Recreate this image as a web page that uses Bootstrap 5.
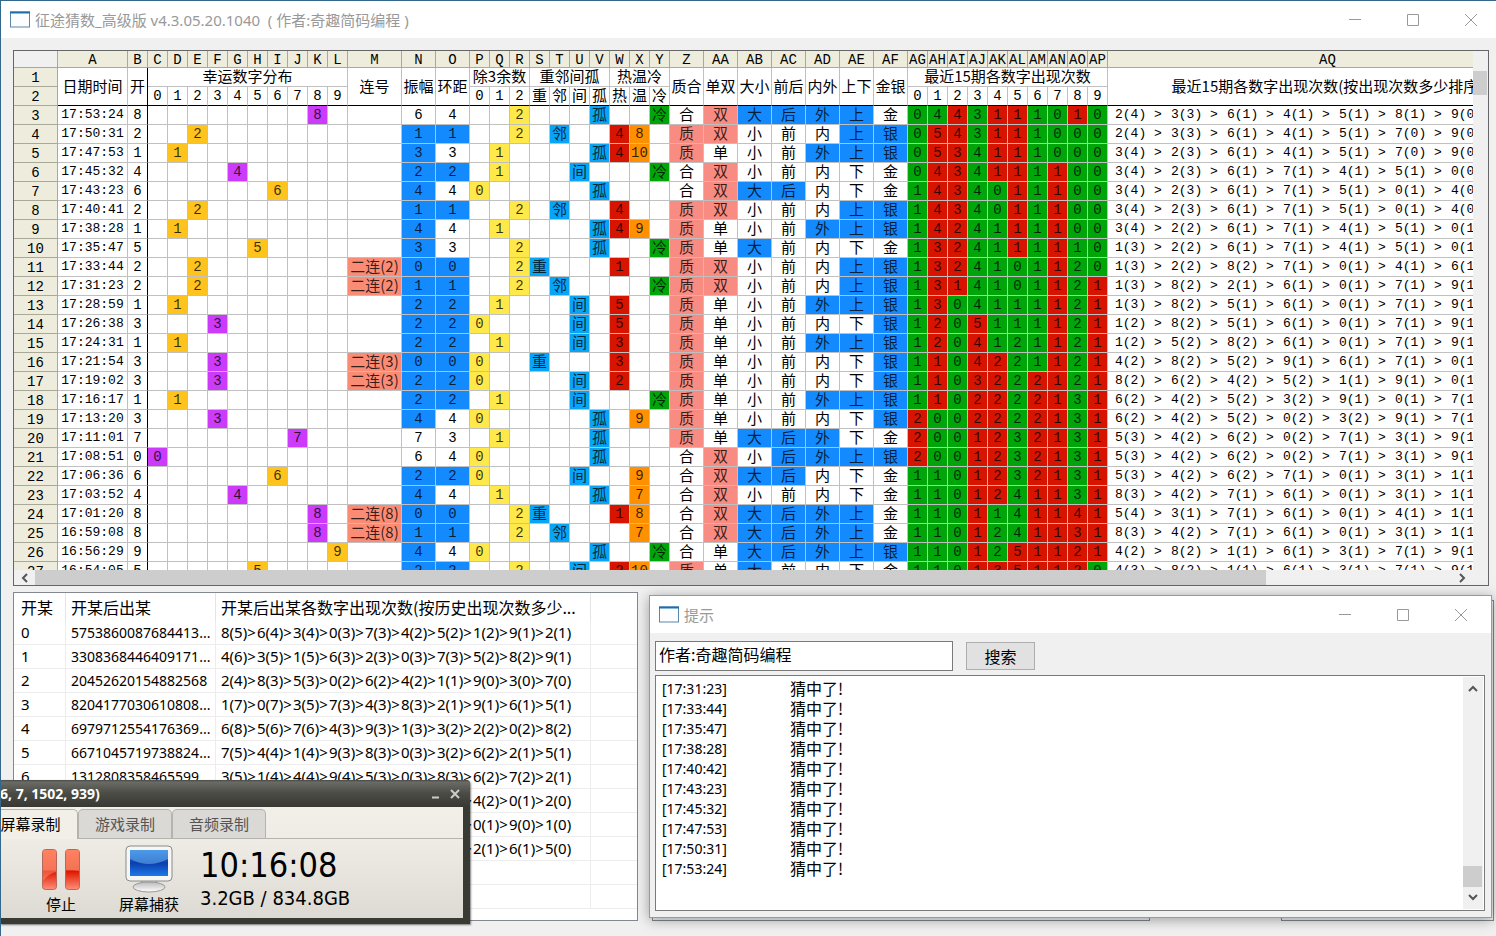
<!DOCTYPE html>
<html lang="zh-CN">
<head>
<meta charset="utf-8">
<meta name="viewport" content="width=device-width, initial-scale=1">
<title>征途猜数_高级版</title>
<link rel="stylesheet" href="https://cdn.jsdelivr.net/npm/bootstrap@5.3.0/dist/css/bootstrap.min.css">
<style>
  body { font-family: "Noto Sans", "Noto Sans CJK SC", sans-serif; font-size: 15px; line-height: 20px; color: #000; background: #f0f0f0; }
  .app { height: 100vh; border-left: 1px solid #33688c; border-top: 1px solid #33688c; }
  .titlebar { height: 37px; background: #fff; color: #999; padding: 0 19px 0 9px; gap: 5px; }
  .winbtns { gap: 46px; }
  .winbtns button, .plainbtn { border: 0; padding: 0; background: none; line-height: 0; }
  .workarea { padding: 12px 7px 15px 12px; gap: 6px; }

  /* number grid */
  .sheet { border: 1px solid #666; background: #f0f0f0; }
  .sheet-view { background: #fff; }
  .grid { table-layout: fixed; width: 1534px; border-collapse: separate; border-spacing: 0; font: 14px/18px "Liberation Mono", "Noto Sans CJK SC", monospace; text-align: center; }
  .grid th, .grid td { padding: 0; font-weight: 400; border: solid #c0c0c0; border-width: 0 1px 1px 0; white-space: nowrap; vertical-align: middle; }
  .grid .hd { background: #eeeddd; border-color: #a9a998; line-height: 16px; padding-top: 2px; }
  .grid .colrow th { line-height: 14px; }
  .grid .corner { background: #f0f0f0; }
  .grid .zh { font-family: "Noto Sans CJK SC", sans-serif; font-size: 15px; line-height: 16px; padding-bottom: 2px; }
  .grid .edge { border-right-color: #000; }
  .grid .base { border-bottom-color: #000; }
  .grid .clock { font-size: 13px; }
  .grid .seq { font-size: 13px; text-align: left; padding-left: 7px; }
  .seq span { display: inline-block; width: 56px; white-space: pre; }
  .f { color: rgba(0,0,0,.78); }
  .f-blue { background: #148aff; } .f-orange { background: #ffc31e; } .f-purple { background: #cc3bfa; }
  .f-salmon { background: #fa8c75; } .f-pink { background: #f98c82; } .f-yellow { background: #ffe94a; }
  .f-cyan { background: #08a5f7; } .f-red { background: #d61400; } .f-amber { background: #ff9100; } .f-green { background: #00a50a; }
  .vbar { width: 15px; padding: 20px 1px 0 0; }
  .vbar div { height: 24px; background: #cdcdcd; }
  .hbar { height: 15px; }
  .hbar .thumb { width: 83.5%; background: #cdcdcd; }
  .arrow { width: 21px; }

  /* history list */
  .lower { gap: 14px; }
  .history { width: 625px; border: 1px solid #828790; background: #fff; padding-bottom: 11px; }
  .history table { table-layout: fixed; width: 100%; border-collapse: separate; border-spacing: 0; }
  .history th { font: 16px/28px "Noto Sans CJK SC", sans-serif; border-right: 1px solid #e4e4e4; padding: 0 0 0 5px; white-space: nowrap; }
  .history td { height: 24px; line-height: 23px; padding: 0 0 0 5px; border: solid #ededed; border-width: 0 1px 1px 0; white-space: nowrap; }
  .history th:first-child, .history td:first-child { padding-left: 7px; }
  .history th:last-child, .history td:last-child { border-right: 0; }
  .history .run { font-size: 14px; }
  .history td span { display: inline-block; width: 36px; }
  .underpane { border: 1px solid #828790; background: #f0f0f0; }
  .underpane.one { width: 498px; } .underpane.two { width: 213px; margin-right: -5px; }

  /* hint window */
  .hint { left: 636px; right: -3px; bottom: 3px; border: 1px solid #999; background: #f0f0f0; box-shadow: 0 2px 12px rgba(0,0,0,.35); }
  .hint .titlebar { padding-right: 24px; }
  .hint-body { padding: 8px 6px 6px 5px; gap: 4px; }
  .search { gap: 13px; }
  .search input { width: 298px; height: 30px; border: 1px solid #7a7a7a; background: #fff; padding: 0 3px 4px; font: 16px/24px "Noto Sans CJK SC", sans-serif; }
  .search button { width: 69px; height: 28px; border: 1px solid #adadad; background: #e1e1e1; padding: 0; font: 16px/24px "Noto Sans CJK SC", sans-serif; }
  .log { border: 1px solid #7a7a7a; background: #fff; padding: 1px; }
  .log ul { padding: 2px 0 30px 5px; }
  .log li { height: 20px; font-family: "Noto Sans CJK SC", sans-serif; font-size: 16px; line-height: 18px; }
  .log time { width: 128px; font-family: "Noto Sans", sans-serif; font-size: 14px; line-height: 20px; }
  .logbar { width: 20px; background: #f0f0f0; padding: 8px 0; }
  .logbar .thumb { height: 21px; width: 19px; background: #cdcdcd; margin: auto 0 6px; }

  /* screen recorder */
  .recorder { left: -1px; bottom: 12px; width: 470px; background: #3a3a35; border-radius: 0 4px 0 0; padding: 0 7px 6px 0; box-shadow: 1px 1px 2px rgba(0,0,0,.5); }
  .rec-title { height: 27px; margin-right: -7px; padding-right: 10px; border-radius: 0 4px 0 0; background: linear-gradient(#4a4b46, #6a6b65 8%, #4a4b45 50%, #383933); color: #fff; font: bold 14px/20px "Noto Sans", sans-serif; gap: 10px; }
  .rec-body { background: linear-gradient(#f2efe8, #efece5 30%, #dcdad2); height: 111px; }
  .rec-tabs { border-bottom: 1px solid #b5b3ad; height: 32px; padding-top: 2px; font-family: "Noto Sans CJK SC", sans-serif; }
  .rec-tabs button { border: 1px solid #b5b3ad; border-bottom: 0; border-radius: 5px 5px 0 0; background: #dad9d5; color: #555; width: 94px; padding: 0; font-size: 15px; }
  .rec-tabs .on { background: #f2efe8; color: #000; width: 78px; border-left: 0; border-radius: 0 5px 0 0; padding: 0 16px 2px 0; margin-bottom: -1px; }
  .rec-tools { padding: 6px 0 0 30px; }
  .rec-tools button { border: 0; background: none; padding: 0; font: 15px/22px "Noto Sans CJK SC", sans-serif; width: 62px; }
  .rec-tools svg { display: block; margin: 0 auto; }
  .rec-tools .grab { margin-left: 26px; }
  .rec-info { font-family: "DejaVu Sans Condensed", "DejaVu Sans", sans-serif; padding-left: 20px; font-size: 20px; line-height: 26px; }
  .rec-info strong { font-size: 34px; font-weight: 400; line-height: 40px; display: block; }
</style>
</head>
<body>
<div class="app d-flex flex-column overflow-hidden position-relative">
  <header class="titlebar d-flex align-items-center flex-shrink-0">
    <svg width="20" height="17" viewBox="0 0 20 17"><rect x=".5" y="1" width="19" height="15" fill="#fbfdff" stroke="#5c86a8"/><path d="M0 1.5h20" stroke="#1b6eb0" stroke-width="2"/></svg>
    <span class="me-auto">征途猜数_高级版 v4.3.05.20.1040&nbsp; ( 作者:奇趣简码编程 )</span>
    <div class="winbtns d-flex">
      <button type="button" aria-label="最小化"><svg width="12" height="12"><path d="M0 5.5h12" stroke="#999"/></svg></button>
      <button type="button" aria-label="最大化"><svg width="12" height="12"><path d="M.5.5h11v11H.5z" fill="none" stroke="#999"/></svg></button>
      <button type="button" aria-label="关闭"><svg width="12" height="12"><path d="M0 0l12 12M12 0L0 12" stroke="#999"/></svg></button>
    </div>
  </header>

  <main class="workarea d-flex flex-column flex-grow-1 overflow-hidden">
    <section class="sheet d-flex flex-column flex-grow-1 overflow-hidden">
      <div class="d-flex flex-grow-1 overflow-hidden">
        <div class="sheet-view flex-grow-1 overflow-hidden"><table class="grid" id="grid"></table></div>
        <div class="vbar flex-shrink-0"><div></div></div>
      </div>
      <div class="hbar d-flex flex-shrink-0">
        <button type="button" class="plainbtn arrow" aria-label="向左"><svg width="8" height="10"><path d="M6 1L2 5l4 4" fill="none" stroke="#555" stroke-width="2"/></svg></button>
        <div class="thumb"></div>
        <button type="button" class="plainbtn arrow ms-auto me-3" aria-label="向右"><svg width="8" height="10"><path d="M2 1l4 4-4 4" fill="none" stroke="#555" stroke-width="2"/></svg></button>
      </div>
    </section>

    <section class="lower d-flex flex-shrink-0 position-relative">
      <div class="history">
        <table>
          <colgroup><col style="width:52px"><col style="width:150px"><col style="width:375px"><col></colgroup>
          <thead><tr><th>开某</th><th>开某后出某</th><th>开某后出某各数字出现次数(按历史出现次数多少...</th><th></th></tr></thead>
          <tbody id="history"></tbody>
        </table>
      </div>
      <div class="underpane one mt-2"></div>
      <div class="underpane two mt-2 ms-auto"></div>

      <div class="hint position-absolute">
        <div class="titlebar d-flex align-items-center">
          <svg width="20" height="17" viewBox="0 0 20 17"><rect x=".5" y="1" width="19" height="15" fill="#fbfdff" stroke="#5c86a8"/><path d="M0 1.5h20" stroke="#1b6eb0" stroke-width="2"/></svg>
          <span class="me-auto">提示</span>
          <div class="winbtns d-flex">
            <button type="button" aria-label="最小化"><svg width="12" height="12"><path d="M0 5.5h12" stroke="#999"/></svg></button>
            <button type="button" aria-label="最大化"><svg width="12" height="12"><path d="M.5.5h11v11H.5z" fill="none" stroke="#999"/></svg></button>
            <button type="button" aria-label="关闭"><svg width="12" height="12"><path d="M0 0l12 12M12 0L0 12" stroke="#999"/></svg></button>
          </div>
        </div>
        <div class="hint-body d-flex flex-column">
          <form class="search d-flex align-items-center">
            <input type="text" aria-label="关键字" value="作者:奇趣简码编程">
            <button type="button">搜索</button>
          </form>
          <div class="log d-flex">
            <ul class="list-unstyled m-0 flex-grow-1" id="log"></ul>
            <div class="logbar d-flex flex-column">
              <svg class="mx-auto" width="10" height="8"><path d="M1 6l4-4 4 4" fill="none" stroke="#555" stroke-width="2"/></svg>
              <div class="thumb"></div>
              <svg class="mx-auto" width="10" height="8"><path d="M1 2l4 4 4-4" fill="none" stroke="#555" stroke-width="2"/></svg>
            </div>
          </div>
        </div>
      </div>
    </section>
  </main>

  <aside class="recorder position-absolute">
    <div class="rec-title d-flex align-items-center">
      <span class="me-auto">6, 7, 1502, 939)</span>
      <button type="button" class="plainbtn" aria-label="最小化"><svg width="9" height="10"><path d="M1 8.5h7" stroke="#ccc" stroke-width="2"/></svg></button>
      <button type="button" class="plainbtn" aria-label="关闭"><svg width="10" height="10"><path d="M1 1l8 8M9 1L1 9" stroke="#ccc" stroke-width="2"/></svg></button>
    </div>
    <div class="rec-body">
      <div class="rec-tabs d-flex">
        <button type="button" class="on">屏幕录制</button><button type="button">游戏录制</button><button type="button">音频录制</button>
      </div>
      <div class="rec-tools d-flex">
        <button type="button">
          <svg width="40" height="48" viewBox="0 0 40 48">
            <defs><linearGradient id="bars" x2="0" y2="1"><stop stop-color="#ff7a58"/><stop offset=".5" stop-color="#e85a42"/><stop offset=".55" stop-color="#e01800"/><stop offset="1" stop-color="#ff9078"/></linearGradient></defs>
            <rect x="1.500" y="4.500" width="14" height="40" rx="3" fill="url(#bars)" stroke="#b8685a"/>
            <rect x="24.500" y="4.500" width="14" height="40" rx="3" fill="url(#bars)" stroke="#b8685a"/>
            <path d="M2 5h13v22Q8 28 2 36z" fill="#ff8a6a" opacity=".55"/><path d="M25 5h13v21q-7-2-13-1z" fill="#ff8a6a" opacity=".5"/>
          </svg>停止</button>
        <button type="button" class="grab">
          <svg width="48" height="48" viewBox="0 0 48 48">
            <defs><linearGradient id="scr" x2="0" y2="1"><stop stop-color="#2a7bdc"/><stop offset=".5" stop-color="#0b3fae"/><stop offset="1" stop-color="#1d78e8"/></linearGradient>
            <linearGradient id="ft" x2="0" y2="1"><stop stop-color="#bbb"/><stop offset="1" stop-color="#fff"/></linearGradient></defs>
            <path d="M17 35h14l1 6H16z" fill="#ddd" stroke="#999"/>
            <ellipse cx="24" cy="42" rx="16" ry="5" fill="url(#ft)" stroke="#999"/>
            <rect x="1" y="1" width="46" height="35" rx="4" fill="#f6f6f4" stroke="#8a8a8a"/>
            <rect x="5" y="5" width="38" height="26" fill="url(#scr)"/>
            <path d="M5 5h38v9Q24 24 5 14z" fill="#6ab4f4" opacity=".55"/>
          </svg>屏幕捕获</button>
        <div class="rec-info"><strong>10:16:08</strong>3.2GB / 834.8GB</div>
      </div>
    </div>
  </aside>
</div>

<script>
// time, digit, hot count, warm count, cold, counts of 0-9, their colours, ranking as digit+count pairs
const draws = `
17:53:24 8 - - c 0443111010 ggrgrrggrg 24336141518190
17:50:31 2 4 8 - 0543111000 grrgrrgggg 24336141517090
17:47:53 1 4 10 - 0534111000 grrgrrgggg 34236141517090
17:45:32 4 - - c 0434111100 grrgrrgrgg 34236171415100
17:43:23 6 - - - 1434011100 grrggrgrgg 34236171510140
17:40:41 2 4 - - 1434011100 grrggrgrgg 34236171510140
17:38:28 1 4 9 - 1424111100 grrggrgrgg 34226171415101
17:35:47 5 - - c 1324111110 grrggrgrgg 13226171415101
17:33:44 2 1 - - 1324101120 grrggggrgg 13228271014161
17:31:23 2 - - c 1314101121 grrggggrgr 13822161017191
17:28:59 1 5 - - 1304111121 grgggggrgr 13825161017191
17:26:38 3 5 - - 1205111121 grgrgggrgr 12825161017191
17:24:31 1 3 - - 1204121121 grgrgggrgr 12528261017191
17:21:54 3 3 - - 1104221121 grgrrggrgr 42825291617101
17:19:02 3 2 - - 1103222121 grgrrgrrgr 82624252119101
17:16:17 1 - - c 1102222131 grgrrgrrgr 62425232910171
17:13:20 3 - 9 - 2002222131 rggrrgrrgr 62425202329171
17:11:01 7 - - - 2001232131 rggrrgrrgr 53426202713191
17:08:51 0 - - - 2001232131 rggrrgrrgr 53426202713191
17:06:36 6 - 9 - 1101232131 gggrrgrrgr 53426271013111
17:03:52 4 - 7 - 1101241131 gggrrgrrgr 83427161013111
17:01:20 8 1 8 - 1101141141 gggrggrrrr 54317161014111
16:59:08 8 - 7 - 1101241131 gggrggrrrr 83427161013111
16:56:29 9 - - c 1101251121 gggrgrrrrr 42821161317191
16:54:05 5 2 10 - 1101351120 gggrrrrrrg 43821161317191`.trim().split("\n").map(l => l.split(" "));

const names = [..."ABCDEFGHIJKLMNOPQRSTUVWXYZ", ..."ABCDEFGHIJKLMNOPQ"].map((c, i) => i > 25 ? "A" + c : c);
const widths = [44, 70, 20, ...Array(10).fill(20), 54, 34, 34, ...Array(10).fill(20), ...Array(7).fill(34), ...Array(10).fill(20), 440];
const cell = (text = "", fill = "", extra = "") => `<td class="${extra}${fill ? " f f-" + fill : ""}">${text}</td>`;
const digits = [0,1,2,3,4,5,6,7,8,9];
const tall = (t, x = "") => `<th rowspan="2" class="zh base ${x}">${t}</th>`;
const sub = (t, x = "") => `<th class="base ${x}">${t}</th>`;

let html = "<colgroup>" + widths.map(w => `<col style="width:${w}px">`).join("") + "</colgroup>";
html += `<thead><tr class="colrow"><th class="hd corner"></th>${names.map(n => `<th class="hd">${n}</th>`).join("")}</tr>`;
html += `<tr><th class="hd">1</th>${tall("日期时间")}${tall("开", "edge")}<th colspan="10" class="zh">幸运数字分布</th>${tall("连号")}${tall("振幅")}${tall("环距")}
<th colspan="3" class="zh">除3余数</th><th colspan="4" class="zh">重邻间孤</th><th colspan="3" class="zh">热温冷</th>
${["质合","单双","大小","前后","内外","上下","金银"].map(t => tall(t)).join("")}<th colspan="10" class="zh">最近15期各数字出现次数</th>${tall("最近15期各数字出现次数(按出现次数多少排序)")}</tr>`;
html += `<tr><th class="hd">2</th>${digits.map(d => sub(d)).join("")}${[0,1,2].map(d => sub(d)).join("")}${[..."重邻间孤热温冷"].map(t => sub(t, "zh")).join("")}${digits.map(d => sub(d)).join("")}</tr></thead><tbody>`;

draws.forEach(([time, ds, hot, warm, cold, counts, tints, rank], i) => {
  const d = +ds, next = i + 1 < draws.length ? +draws[i + 1][1] : 7, prev = i ? +draws[i - 1][1] : -1;
  const swing = Math.abs(d - next), ring = Math.min(swing, 10 - swing);
  let r = `<th class="hd">${i + 3}</th>` + cell(time, "", "clock") + cell(d, "", "edge");
  digits.forEach(n => r += n === d ? cell(d, [0,3,4,7,8].includes(d) ? "purple" : "orange") : cell());
  r += d === next || d === prev ? cell(`二连(${d})`, "salmon", "zh") : cell();
  r += cell(swing, swing < 5 ? "blue" : "") + cell(ring, ring < 3 ? "blue" : "");
  [0,1,2].forEach(n => r += d % 3 === n ? cell(n, "yellow") : cell());
  [..."重邻间孤"].forEach((t, n) => r += Math.min(ring, 3) === n ? cell(t, "cyan", "zh") : cell());
  r += hot !== "-" ? cell(hot, "red") : cell();
  r += warm !== "-" ? cell(warm, "amber") : cell();
  r += cold === "c" ? cell("冷", "green", "zh") : cell();
  const pair = (set, yes, no, fill) => set.includes(ds) ? cell(yes, fill, "zh") : cell(no, "", "zh");
  r += pair("12357", "质", "合", "pink") + pair("02468", "双", "单", "pink") + pair("56789", "大", "小", "blue") + pair("67890", "后", "前", "blue")
     + pair("78901", "外", "内", "blue") + pair("89012", "上", "下", "blue") + pair("90123", "银", "金", "blue");
  [...counts].forEach((c, n) => r += cell(c, tints[n] === "r" ? "red" : "green"));
  r += cell(rank.match(/../g).map(p => `<span>${p[0]}(${p[1]}) &gt; </span>`).join(""), "", "seq");
  html += `<tr>${r}</tr>`;
});
document.getElementById("grid").innerHTML = html + "</tbody>";

const history = [
  ["5753860087684413...", "85643403734252129121"], ["3308368446409171...", "46351563230373528291"],
  ["20452620154882568", "24835302624211903070"], ["8204177030610808...", "17073573438321916151"],
  ["6979712554176369...", "68567643931332220282"], ["6671045719738824...", "75441493830332622151"],
  ["1312808358465599", "35144494530383627221"], ["", "85745463131292420120"], ["", "75643423324282019010"], ["", "94846433730313216150"]];
// two blank ruled lines follow the ten digits
document.getElementById("history").innerHTML = Array.from({length: 12}, (_, i) => {
  const [run, rank] = history[i] || ["", ""];
  const items = (rank.match(/../g) || []).map((p, n) => `<span>${p[0]}(${p[1]})${n < 9 ? "&gt;" : ""}</span>`).join("");
  return `<tr><td>${i < 10 ? i : ""}</td><td class="run">${run}</td><td>${items}</td><td></td></tr>`;
}).join("");

document.getElementById("log").innerHTML = ["17:31:23","17:33:44","17:35:47","17:38:28","17:40:42","17:43:23","17:45:32","17:47:53","17:50:31","17:53:24"]
  .map(t => `<li class="d-flex"><time>[${t}]</time>猜中了!</li>`).join("");
</script>
<script src="https://cdn.jsdelivr.net/npm/bootstrap@5.3.0/dist/js/bootstrap.bundle.min.js"></script>
</body>
</html>
